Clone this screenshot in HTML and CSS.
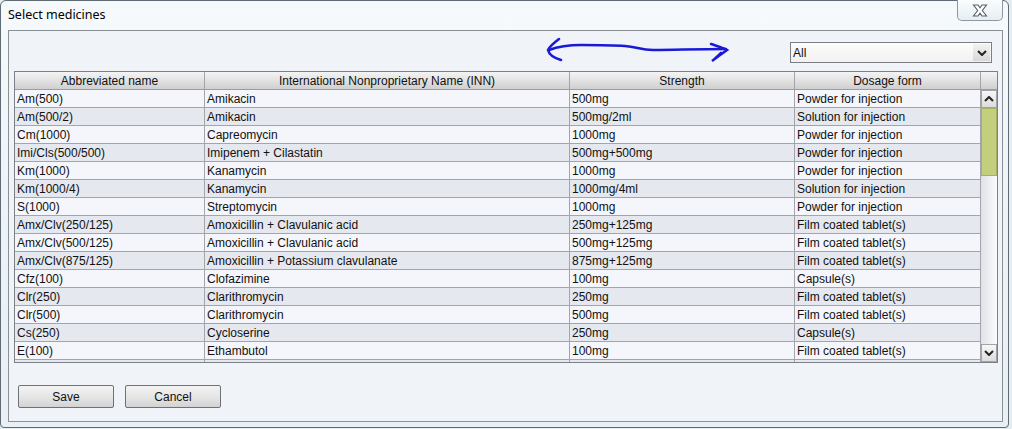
FILE: index.html
```html
<!DOCTYPE html>
<html lang="en">
<head>
    <meta charset="UTF-8">
    <title>Select medicines</title>
    <link rel="stylesheet" href="styles.css">
</head>
<body>
<div class="window">
    <div class="titlebar">
        <span class="title">Select medicines</span>
        <div class="close">
            <svg width="20" height="13" viewBox="0 0 20 13">
                <path d="M3.5 1 H8 L10 3.8 L12 1 H16.5 L12.3 6.5 L16.5 12 H12 L10 9.2 L8 12 H3.5 L7.7 6.5 Z" fill="#fff" stroke="#55606b" stroke-width="1.1"/>
            </svg>
        </div>
    </div>
    <div class="panel">
        <div class="toolbar">
            <svg class="scribble" width="186" height="28" viewBox="0 0 186 28">
                <path d="M14 2 C10 5, 5 9, 3 13 C4 17, 9 21, 16 23" fill="none" stroke="#1a1ad6" stroke-width="2.6" stroke-linecap="round"/>
                <path d="M4 13 C12 10, 22 8, 36 8 C52 8, 66 8, 80 9 C92 10, 96 13, 108 13 C130 13, 150 12, 181 12" fill="none" stroke="#1a1ad6" stroke-width="2.6" stroke-linecap="round"/>
                <path d="M166 7 C172 9, 177 10, 182 13 C178 16, 172 20, 167 24 C170 22, 173 19, 176 16" fill="none" stroke="#1a1ad6" stroke-width="2.6" stroke-linecap="round"/>
            </svg>
            <div class="select">
                <span>All</span>
                <span class="select-btn">
                    <svg width="10" height="6" viewBox="0 0 10 6"><path d="M1 1 L5 5 L9 1" fill="none" stroke="#222" stroke-width="2"/></svg>
                </span>
            </div>
        </div>

        <div class="grid">
            <div class="grid-head">
                <div class="cell c1">Abbreviated name</div>
                <div class="cell c2">International Nonproprietary Name (INN)</div>
                <div class="cell c3">Strength</div>
                <div class="cell c4">Dosage form</div>
                <div class="cell corner"></div>
            </div>
            <div class="grid-body">
                <div class="rows">
                    <div class="row"><div class="cell c1">Am(500)</div><div class="cell c2">Amikacin</div><div class="cell c3">500mg</div><div class="cell c4">Powder for injection</div></div>
                    <div class="row"><div class="cell c1">Am(500/2)</div><div class="cell c2">Amikacin</div><div class="cell c3">500mg/2ml</div><div class="cell c4">Solution for injection</div></div>
                    <div class="row"><div class="cell c1">Cm(1000)</div><div class="cell c2">Capreomycin</div><div class="cell c3">1000mg</div><div class="cell c4">Powder for injection</div></div>
                    <div class="row"><div class="cell c1">Imi/Cls(500/500)</div><div class="cell c2">Imipenem + Cilastatin</div><div class="cell c3">500mg+500mg</div><div class="cell c4">Powder for injection</div></div>
                    <div class="row"><div class="cell c1">Km(1000)</div><div class="cell c2">Kanamycin</div><div class="cell c3">1000mg</div><div class="cell c4">Powder for injection</div></div>
                    <div class="row"><div class="cell c1">Km(1000/4)</div><div class="cell c2">Kanamycin</div><div class="cell c3">1000mg/4ml</div><div class="cell c4">Solution for injection</div></div>
                    <div class="row"><div class="cell c1">S(1000)</div><div class="cell c2">Streptomycin</div><div class="cell c3">1000mg</div><div class="cell c4">Powder for injection</div></div>
                    <div class="row"><div class="cell c1">Amx/Clv(250/125)</div><div class="cell c2">Amoxicillin + Clavulanic acid</div><div class="cell c3">250mg+125mg</div><div class="cell c4">Film coated tablet(s)</div></div>
                    <div class="row"><div class="cell c1">Amx/Clv(500/125)</div><div class="cell c2">Amoxicillin + Clavulanic acid</div><div class="cell c3">500mg+125mg</div><div class="cell c4">Film coated tablet(s)</div></div>
                    <div class="row"><div class="cell c1">Amx/Clv(875/125)</div><div class="cell c2">Amoxicillin + Potassium clavulanate</div><div class="cell c3">875mg+125mg</div><div class="cell c4">Film coated tablet(s)</div></div>
                    <div class="row"><div class="cell c1">Cfz(100)</div><div class="cell c2">Clofazimine</div><div class="cell c3">100mg</div><div class="cell c4">Capsule(s)</div></div>
                    <div class="row"><div class="cell c1">Clr(250)</div><div class="cell c2">Clarithromycin</div><div class="cell c3">250mg</div><div class="cell c4">Film coated tablet(s)</div></div>
                    <div class="row"><div class="cell c1">Clr(500)</div><div class="cell c2">Clarithromycin</div><div class="cell c3">500mg</div><div class="cell c4">Film coated tablet(s)</div></div>
                    <div class="row"><div class="cell c1">Cs(250)</div><div class="cell c2">Cycloserine</div><div class="cell c3">250mg</div><div class="cell c4">Capsule(s)</div></div>
                    <div class="row"><div class="cell c1">E(100)</div><div class="cell c2">Ethambutol</div><div class="cell c3">100mg</div><div class="cell c4">Film coated tablet(s)</div></div>
                    <div class="row"><div class="cell c1"></div><div class="cell c2"></div><div class="cell c3"></div><div class="cell c4"></div></div>
                </div>
                <div class="vscroll">
                    <div class="sb-btn">
                        <svg width="10" height="6" viewBox="0 0 10 6"><path d="M1 5 L5 1 L9 5" fill="none" stroke="#222" stroke-width="2"/></svg>
                    </div>
                    <div class="sb-thumb"></div>
                    <div class="sb-track"></div>
                    <div class="sb-btn">
                        <svg width="10" height="6" viewBox="0 0 10 6"><path d="M1 1 L5 5 L9 1" fill="none" stroke="#222" stroke-width="2"/></svg>
                    </div>
                </div>
            </div>
        </div>

        <div class="actions">
            <button class="btn">Save</button>
            <button class="btn">Cancel</button>
        </div>
    </div>
</div>
</body>
</html>
```

FILE: styles.css
```css
*{
    margin: 0;
    padding: 0;
    box-sizing: border-box;
}
body{
    width: 1012px;
    height: 429px;
    overflow: hidden;
    background: #e4edf2;
    font-family: "Liberation Sans", Arial, sans-serif;
    font-size: 12px;
    color: #111;
}
.window{
    width: 1009px;
    height: 428px;
    border: 1px solid #5f6a74;
    border-radius: 6px 6px 4px 4px;
    background: linear-gradient(180deg, #f6fafc 0%, #eef4f8 40%, #e8f0f5 100%);
    display: flex;
    flex-direction: column;
}
.titlebar{
    height: 29px;
    display: flex;
    justify-content: space-between;
    align-items: flex-start;
    padding-left: 7px;
}
.title{
    font-family: "Noto Sans", "Liberation Sans", sans-serif;
    font-size: 12.5px;
    line-height: 16px;
    padding-top: 6px;
    color: #000;
}
.close{
    width: 46px;
    height: 21px;
    margin-top: -1px;
    margin-right: 5px;
    border: 1px solid #8e979f;
    border-top: none;
    border-radius: 0 0 5px 5px;
    background: linear-gradient(180deg, #fbfdfe, #e6eef3);
    display: flex;
    align-items: center;
    justify-content: center;
}
.panel{
    width: 995px;
    height: 392px;
    margin-left: 7px;
    border: 1px solid #8b9096;
    background: #f0f3f8;
    padding: 0 4px 0 5px;
    display: flex;
    flex-direction: column;
}
.toolbar{
    height: 40px;
    display: flex;
    align-items: flex-start;
}
.scribble{
    margin-left: 531px;
    margin-top: 6px;
}
.select{
    margin-left: auto;
    margin-right: 6px;
    margin-top: 11px;
    width: 202px;
    height: 21px;
    border: 1px solid #7b7f84;
    background: linear-gradient(180deg, #fdfdfd, #f1f1f1);
    display: flex;
    align-items: center;
    justify-content: space-between;
    padding-left: 2px;
}
.select-btn{
    width: 17px;
    height: 17px;
    margin-right: 1px;
    display: flex;
    align-items: center;
    justify-content: center;
    background: linear-gradient(180deg, #f2f2f2, #d8d8d8);
}
.grid{
    width: 984px;
    border: 1px solid #7c8187;
}
.grid-head{
    display: flex;
    height: 18px;
    border-bottom: 1px solid #9a9ca2;
    background: linear-gradient(180deg, #f4f4f4 0%, #e2e2e2 50%, #cfcfcf 100%);
}
.grid-head .cell{
    text-align: center;
    padding-left: 0;
}
.cell{
    height: 100%;
    border-right: 1px solid #a3a5ab;
    padding: 1px 0 0 2px;
    line-height: 17px;
    white-space: nowrap;
    overflow: hidden;
}
.c1{ width: 190px; }
.c2{ width: 365px; }
.c3{ width: 225px; }
.c4{ width: 186px; }
.corner{
    width: 16px;
    border-right: none;
}
.grid-body{
    display: flex;
    height: 272px;
}
.rows{
    width: 966px;
    overflow: hidden;
}
.row{
    display: flex;
    height: 18px;
    border-bottom: 1px solid #a3a5ab;
    background: #f4f6fc;
}
.row:nth-child(even){
    background: #e5e8ef;
}
.vscroll{
    width: 16px;
    display: flex;
    flex-direction: column;
    background: linear-gradient(90deg, #dfe2e7, #fbfbfc);
}
.sb-btn{
    height: 18px;
    display: flex;
    align-items: center;
    justify-content: center;
    border: 1px solid #a0a3a8;
    background: linear-gradient(180deg, #f7f7f7, #dcdcdc);
}
.sb-thumb{
    height: 68px;
    background: #c3cf7d;
    border: 1px solid #a6b163;
}
.sb-track{
    flex: 1;
}
.actions{
    display: flex;
    gap: 11px;
    padding: 22px 0 0 4px;
}
.btn{
    width: 96px;
    height: 23px;
    border: 1px solid #6e7177;
    border-radius: 2px;
    background: linear-gradient(180deg, #f3f3f3 0%, #e6e6e6 50%, #d3d3d3 100%);
    font-family: "Liberation Sans", Arial, sans-serif;
    font-size: 12px;
    color: #111;
}
```
